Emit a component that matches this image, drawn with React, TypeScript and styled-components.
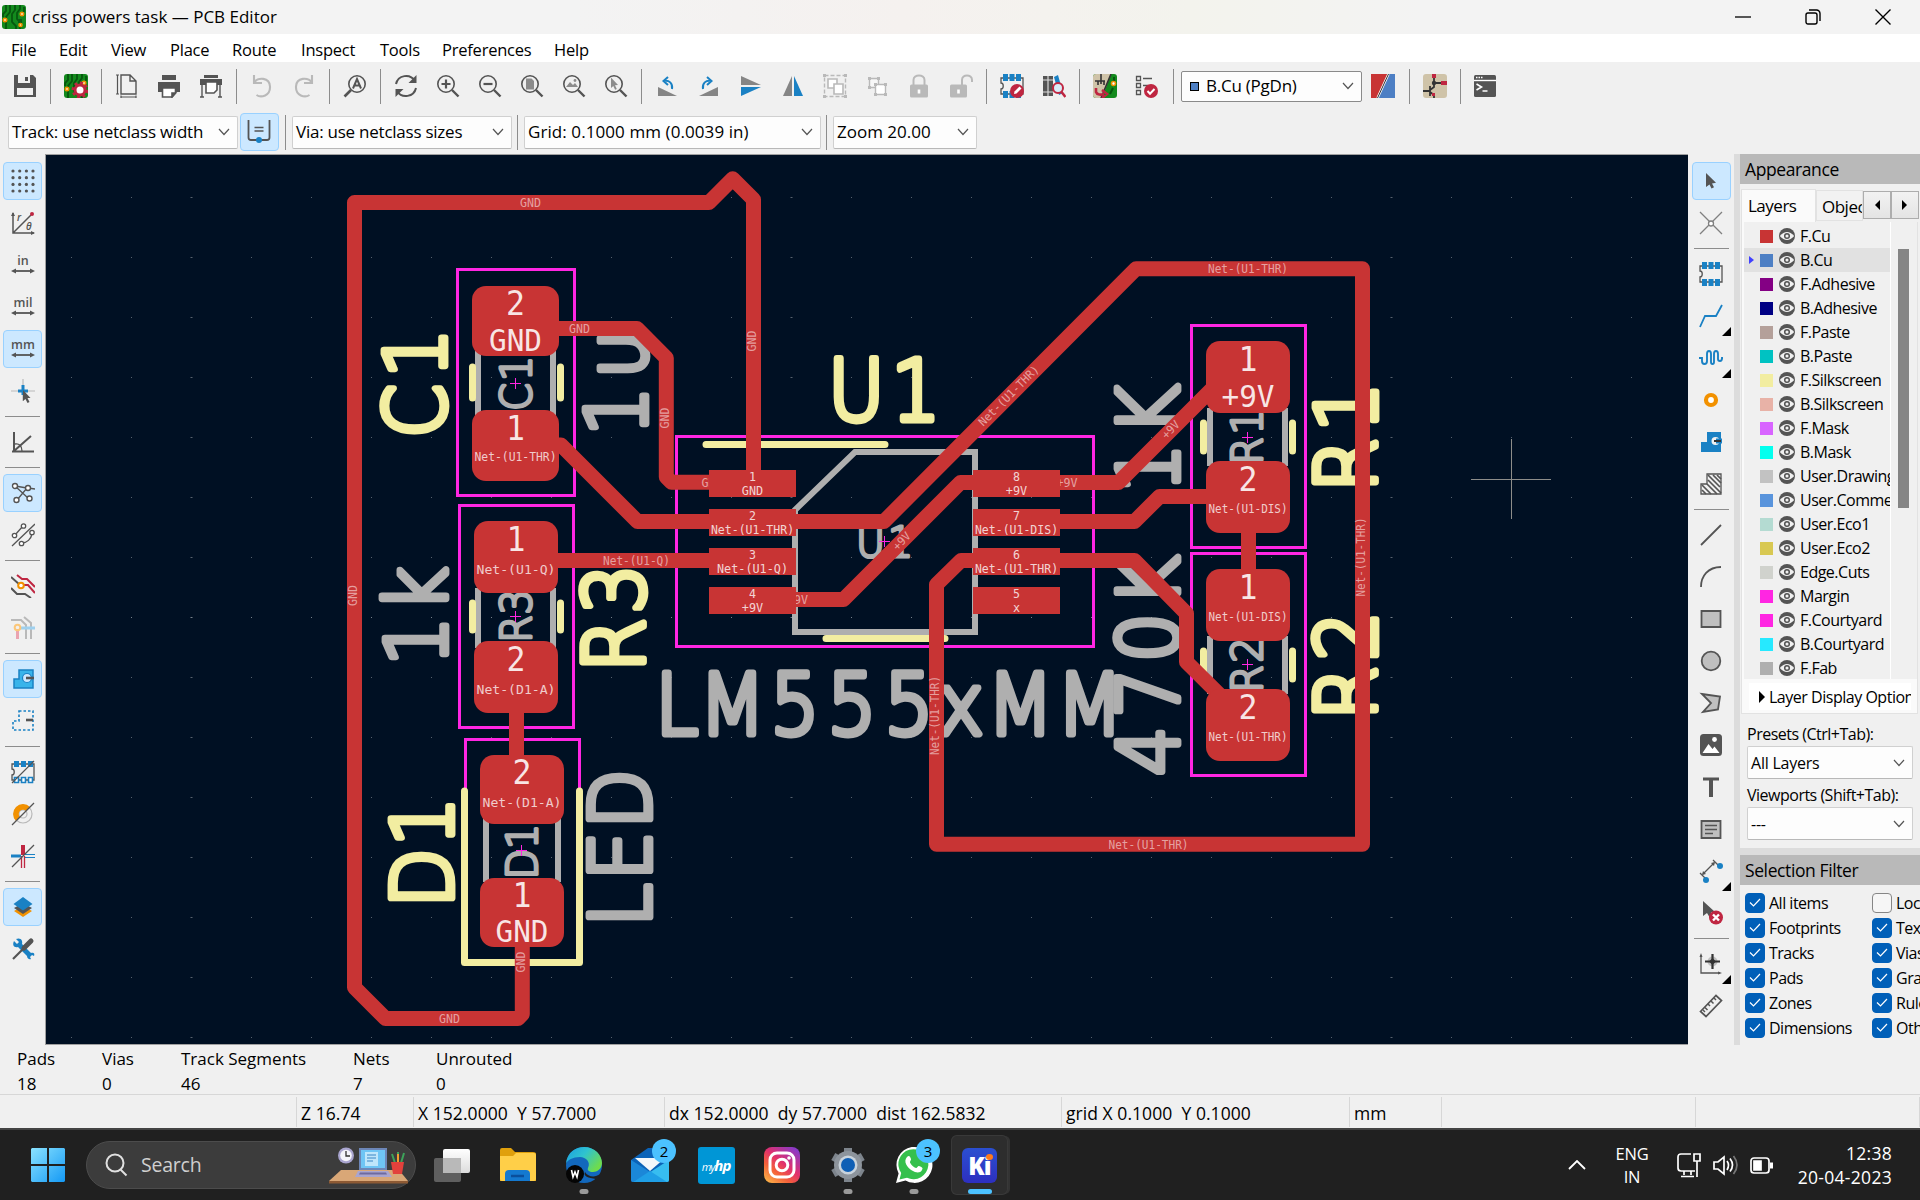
import React from "react";
import styled, { createGlobalStyle } from "styled-components";

const Global = createGlobalStyle`
  * { box-sizing: border-box; }
  body { margin: 0; background: #f0f0f0; overflow: hidden; }
`;

const UI = `"Open Sans", "Noto Sans", sans-serif`;
const G = "#545454";
const B = "#1a81c4";
const R = "#bf2641";
const O = "#f29100";
const L = "#b9b9b9";

/* ---------- shell ---------- */
const Win = styled.div`
  width: 1920px;
  height: 1200px;
  display: flex;
  flex-direction: column;
  background: #f0f0f0;
  color: #000;
  font-family: ${UI};
  font-size: 17px;
  letter-spacing: -0.22px;
  line-height: 24px;
  white-space: nowrap;
  overflow: hidden;
`;
const TitleBar = styled.header`
  height: 34px;
  flex: none;
  display: flex;
  align-items: center;
  padding: 0 2px;
  background: linear-gradient(90deg, #f3f3f3 0 30%, #f5f1ef 47%, #f3f3ed 62%, #f3f3f3 74%);
`;
const TitleText = styled.span`
  flex: 1;
  margin-left: 6px;
  font-size: 17px;
  letter-spacing: 0;
`;
const WinButtons = styled.div`
  display: flex;
`;
const WinButton = styled.div`
  width: 70px;
  height: 34px;
  display: flex;
  align-items: center;
  justify-content: center;
`;
const MenuBar = styled.nav`
  height: 28px;
  flex: none;
  display: flex;
  align-items: center;
  background: #fff;
  padding: 3px 0 0 11px;
`;
const MenuItem = styled.span<{ $w: number }>`
  width: ${(p) => p.$w}px;
  flex: none;
  font-size: 16.5px;
`;
const ToolRow = styled.div<{ $h: number; $pl: number }>`
  height: ${(p) => p.$h}px;
  padding-left: ${(p) => p.$pl}px;
  flex: none;
  display: flex;
  align-items: center;
`;
const Tool = styled.div<{ $on?: boolean }>`
  position: relative;
  width: 39px;
  height: 38px;
  margin: 2px 1.5px;
  flex: none;
  display: flex;
  align-items: center;
  justify-content: center;
  border-radius: 4px;
  border: 1px solid ${(p) => (p.$on ? "#99d1ff" : "transparent")};
  background: ${(p) => (p.$on ? "#cce8ff" : "transparent")};
`;
const VSep = styled.div<{ $m?: string }>`
  width: 1px;
  height: 35px;
  margin: ${(p) => p.$m || "0 4px"};
  background: #8c8c8c;
  flex: none;
`;
const HSep = styled.div`
  width: 35px;
  height: 1px;
  margin: 4px 0;
  background: #8c8c8c;
  flex: none;
`;
const Combo = styled.div<{ $w: number; $h?: number; $dark?: boolean; $ls?: number }>`
  width: ${(p) => p.$w}px;
  height: ${(p) => p.$h || 33}px;
  flex: none;
  display: flex;
  align-items: center;
  justify-content: space-between;
  padding: 0 7px 0 3px;
  letter-spacing: ${(p) => p.$ls ?? -0.24}px;
  background: #fdfdfd;
  border: 1px solid ${(p) => (p.$dark ? "#8a8a8a" : "#d0d0d0")};
  border-bottom-color: ${(p) => (p.$dark ? "#8a8a8a" : "#b8b8b8")};
  border-radius: 2px;
`;
const LayerName = styled.span`
  display: flex;
  align-items: center;
  gap: 7px;
  padding-left: 5px;
`;
const TinySwatch = styled.i`
  width: 9px;
  height: 9px;
  background: #4d7fc4;
  border: 1px solid #000;
`;
const Body = styled.div`
  height: 891px;
  flex: none;
  display: flex;
`;
const SideBar = styled.div<{ $w: number }>`
  width: ${(p) => p.$w}px;
  padding-top: 6px;
  flex: none;
  display: flex;
  flex-direction: column;
  align-items: center;
`;
const Corner = styled.i`
  position: absolute;
  right: -1px;
  bottom: -2px;
  border-left: 9px solid transparent;
  border-bottom: 9px solid #000;
`;
const CanvasBox = styled.main`
  width: 1643px;
  flex: none;
  border: 1px solid #a0a0a0;
  border-right: 0;
  background: #001023;
  & > svg { display: block; }
`;
const Splitter = styled.div`
  width: 6px;
  flex: none;
  background: #dcdcdc;
`;

/* ---------- right panel ---------- */
const Panel = styled.aside`
  width: 180px;
  display: flex;
  flex-direction: column;
  overflow: hidden;
`;
const PanelHead = styled.div`
  height: 30px;
  flex: none;
  padding-left: 5px;
  display: flex;
  align-items: center;
  background: #b9b9b9;
  font-size: 17.5px;
  letter-spacing: -0.4px;
`;
const TabRow = styled.div`
  height: 38px;
  flex: none;
  display: flex;
  align-items: flex-end;
  padding-left: 1px;
`;
const Tab = styled.div<{ $w: number; $active?: boolean }>`
  width: ${(p) => p.$w}px;
  height: ${(p) => (p.$active ? 33 : 31)}px;
  margin-bottom: ${(p) => (p.$active ? 0 : 1)}px;
  padding: 4px 0 0 ${(p) => (p.$active ? 6 : 5)}px;
  overflow: hidden;
  letter-spacing: -0.5px;
  border: 1px solid #e2e2e2;
  border-bottom: ${(p) => (p.$active ? "0" : "1px solid #e2e2e2")};
  background: ${(p) => (p.$active ? "#fafafa" : "#f2f2f2")};
`;
const TabArrow = styled.div`
  width: 28px;
  height: 28px;
  margin-bottom: 3px;
  display: flex;
  align-items: center;
  justify-content: center;
  border: 1px solid #adadad;
  background: linear-gradient(#f2f2f2, #e4e4e4);
`;
const Notebook = styled.div`
  width: 177px;
  height: 492px;
  margin-left: 1px;
  flex: none;
  background: #fafafa;
  border: 1px solid #e2e2e2;
  border-top: 0;
`;
const ListArea = styled.div`
  height: 457px;
  margin-left: 2px;
  display: flex;
  background: #f0f0f0;
`;
const LayerList = styled.div`
  width: 147px;
  overflow: hidden;
  padding-top: 2px;
  border-right: 1px solid #fff;
`;
const LayerRow = styled.div<{ $sel?: boolean }>`
  height: 24px;
  display: flex;
  align-items: center;
  padding-left: 5px;
  font-size: 16px;
  letter-spacing: -0.5px;
  background: ${(p) => (p.$sel ? "#e1e1e1" : "transparent")};
  & > * { flex: none; }
`;
const RowMark = styled.i<{ $sel?: boolean }>`
  width: 11px;
  &::before {
    content: "";
    display: block;
    width: 0;
    border: 4px solid transparent;
    border-right: 0;
    border-left: 5px solid ${(p) => (p.$sel ? "#4040ff" : "transparent")};
  }
`;
const Swatch = styled.i<{ $c: string }>`
  width: 13px;
  height: 13px;
  margin-right: 6px;
  background: ${(p) => p.$c};
`;
const LayerText = styled.span`
  margin-left: 5px;
`;
const ScrollCol = styled.div`
  flex: 1;
  padding: 27px 0 0 7px;
`;
const Thumb = styled.div`
  width: 11px;
  height: 259px;
  background: #858585;
`;
const LayerOptions = styled.div`
  width: 162px;
  height: 27px;
  margin: 4px 0 0 7px;
  padding-left: 10px;
  display: flex;
  align-items: center;
  gap: 4px;
  overflow: hidden;
  background: #fff;
  font-size: 16px;
  letter-spacing: -0.48px;
  & > svg { flex: none; }
`;
const Presets = styled.div`
  height: 134px;
  flex: none;
  padding: 8px 0 0 7px;
  font-size: 16px;
  letter-spacing: -0.5px;
`;
const PresetLabel = styled.div`
  height: 24px;
`;
const PresetCombo = styled(Combo)`
  margin-bottom: 4px;
`;
const Gap = styled.div`
  height: 7px;
  flex: none;
  background: #dcdcdc;
`;
const Filters = styled.div`
  flex: 1;
  padding: 5px 0 0 5px;
  display: grid;
  grid-template-columns: 127px 80px;
  grid-auto-rows: 25px;
  font-size: 16px;
  letter-spacing: -0.5px;
`;
const Check = styled.label`
  display: flex;
  align-items: center;
  gap: 4px;
`;
const Box = styled.i<{ $off?: boolean }>`
  width: 20px;
  height: 20px;
  flex: none;
  display: flex;
  align-items: center;
  justify-content: center;
  border-radius: 4px;
  background: ${(p) => (p.$off ? "#f6f6f6" : "#005fb8")};
  border: 1px solid ${(p) => (p.$off ? "#868686" : "#005fb8")};
`;

/* ---------- footer ---------- */
const InfoBar = styled.div`
  height: 50px;
  flex: none;
  display: flex;
  padding: 2px 0 0 17px;
  border-bottom: 1px solid #d7d7d7;
  font-size: 17px;
  letter-spacing: 0;
`;
const Info = styled.div<{ $w: number }>`
  width: ${(p) => p.$w}px;
  line-height: 24.5px;
`;
const StatusBar = styled.div`
  height: 33px;
  flex: none;
  display: flex;
  padding-top: 2px;
  font-size: 17.5px;
  letter-spacing: 0.05px;
`;
const Status = styled.div<{ $w: number }>`
  width: ${(p) => p.$w}px;
  height: 30px;
  padding-left: 4px;
  line-height: 32px;
  border-right: 1px solid #d7d7d7;
  white-space: pre;
`;
const TaskBar = styled.footer`
  height: 72px;
  flex: none;
  display: flex;
  align-items: center;
  background: #202020;
  border-top: 2px solid #434343;
  color: #fff;
  padding: 0 28px 0 30px;
`;
const StartBox = styled.div`
  width: 56px;
  display: flex;
`;
const Search = styled.div`
  width: 330px;
  height: 48px;
  flex: none;
  display: flex;
  align-items: center;
  padding: 0 6px 0 17px;
  border-radius: 24px;
  background: #3c3c3c;
  border: 1px solid #4c4c4c;
  color: #cfcfcf;
  font-size: 19.5px;
`;
const SearchText = styled.span`
  flex: 1;
  margin-left: 13px;
`;
const TaskApp = styled.div<{ $active?: boolean }>`
  position: relative;
  width: ${(p) => (p.$active ? 57 : 66)}px;
  height: 60px;
  margin-left: ${(p) => (p.$active ? 4 : 0)}px;
  flex: none;
  display: flex;
  align-items: center;
  justify-content: center;
  border-radius: 6px;
  background: ${(p) => (p.$active ? "#2d2d2d" : "transparent")};
  box-shadow: ${(p) => (p.$active ? "inset 0 0 0 1px #393939, 3px 0 0 -1px #333" : "none")};
`;
const Apps = styled.div`
  display: flex;
  margin-left: 3px;
  flex: 1;
`;
const Run = styled.i<{ $on?: boolean }>`
  position: absolute;
  bottom: 1px;
  left: 50%;
  width: ${(p) => (p.$on ? 24 : 9)}px;
  height: 5px;
  border-radius: 3px;
  transform: translateX(-50%);
  background: ${(p) => (p.$on ? "#4cc2ff" : "#9a9a9a")};
`;
const Badge = styled.span`
  position: absolute;
  top: 4px;
  right: 7px;
  width: 24px;
  height: 24px;
  border-radius: 50%;
  background: #4cc2ff;
  color: #000;
  font-size: 15px;
  text-align: center;
`;
const HpText = styled.div`
  width: 37px;
  height: 37px;
  border-radius: 3px;
  background: #0096d6;
  font: italic 700 15px/36px ${UI};
  letter-spacing: -1px;
  text-align: center;
  small { font-size: 11px; font-weight: 400; }
`;
const KiText = styled.div`
  position: relative;
  width: 35px;
  height: 35px;
  border-radius: 6px;
  background: linear-gradient(#2b4fd0, #2d2fc0);
  font: 800 24px/35px ${UI};
  letter-spacing: -1px;
  text-align: center;
  &::after {
    content: "";
    position: absolute;
    right: 4px;
    top: 6px;
    width: 7px;
    height: 6px;
    border-radius: 50%;
    background: #ff7a1a;
  }
`;
const Tray = styled.div`
  display: flex;
  align-items: center;
  font-size: 16.5px;
  line-height: 24px;
`;
const Lang = styled.div`
  width: 40px;
  margin: 0 25px 0 26px;
  text-align: center;
  line-height: 23px;
`;
const Clock = styled.div`
  width: 100px;
  margin-left: 15px;
  text-align: right;
  font-size: 17.5px;
  letter-spacing: 0.3px;
`;

/* ---------- icons ---------- */
const Svg = ({ children, s = 24, vb = "0 0 24 24" }: any) => (
  <svg width={s} height={s} viewBox={vb} fill="none" stroke={G} strokeWidth={1.6}>{children}</svg>
);
const Chevron = ({ c = "#555" }: any) => (
  <svg width="12" height="8" viewBox="0 0 12 8" fill="none" stroke={c} strokeWidth="1.2"><path d="M1 1l5 5.5L11 1" /></svg>
);
const Lens = ({ children }: any) => (
  <Svg><circle cx="10" cy="10" r="8.2" /><path d="M16 16l6.5 6.5" strokeWidth="2.4" />{children}</Svg>
);
const Board = () => (
  <>
    <rect x="0" y="0" width="24" height="24" rx="3" fill="#138a1d" stroke="none" />
    <path d="M4 0v6l-3 3v3M8 0v7l-4 5v12M13 0v5l-3 4v8l4 4v3M18 0v4l-3 4v6l3 3v7M22 2v5" stroke="#07570f" strokeWidth="1.8" />
    <g fill="#ffe9c0" stroke={O}><circle cx="3" cy="15" r="1.7" /><circle cx="20" cy="9" r="1.7" /></g>
  </>
);
const FootprintShape = () => (
  <>
    <path d="M1 4h22v16H1v-5c3 0 3-6 0-6z" strokeWidth="1.3" />
    <g fill={B} stroke="none">
      {[3, 9.5, 16].map((x) => <path key={x} d={`M${x} 0h5v7h-5zM${x} 17h5v7h-5z`} />)}
    </g>
  </>
);
const Arrowed = () => (
  <>
    <path d="M3 18h18" strokeWidth="1.8" />
    <path d="M0 18l5-2.600v5.200zM24 18l-5-2.600v5.200z" fill={G} stroke="none" />
  </>
);
const UnitText = styled.text`
  font: 600 12.5px ${UI};
  letter-spacing: 0;
  fill: ${G};
  stroke: none;
`;
const ThetaText = styled.text`
  font: italic 600 10px ${UI};
  letter-spacing: 0;
  fill: ${G};
  stroke: none;
`;
const Unit = ({ t }: { t: string }) => (
  <Svg><UnitText x="12" y="12" textAnchor="middle">{t}</UnitText><Arrowed /></Svg>
);
const Slash = () => <path d="M1 23L23 1" strokeWidth="1.2" />;

const I: Record<string, React.ReactNode> = {
  app: <Svg><Board /><path d="M16 14h4v4h-4z" fill="#0b5d14" stroke="none" /><circle cx="18.500" cy="20" r="1.500" fill="#ffe9c0" stroke={O} /></Svg>,
  save: <Svg><path d="M1 1h19l3 3v19H1z" fill={G} stroke="none" /><path d="M5 1h12v8H5zM4 14h16v7H4z" fill="#f0f0f0" stroke="none" /><path d="M12 3h3v4h-3z" fill={G} stroke="none" /></Svg>,
  setup: <Svg><Board /><circle cx="16" cy="16" r="5" stroke={R} strokeWidth="3" fill="#fff" /><circle cx="16" cy="16" r="7.200" stroke={R} strokeWidth="2.500" strokeDasharray="3 2.600" /></Svg>,
  page: <Svg><path d="M6 1h9l6 6v13H6zM15 1v6h6" strokeWidth="1.400" /><path d="M2.500 1v19M1 1h3M1 20h3M6 23h15M6 21.500v3M21 21.500v3" strokeWidth="1.200" /></Svg>,
  print: <Svg><path d="M5 1h14v5H5zM1 8h22v10h-4v-4H5v4H1z" fill={G} stroke="none" /><path d="M5.500 14h13v5l-3.500 4H5.500z" fill="#fff" /><path d="M15 23v-4h3.500z" fill={G} /></Svg>,
  plot: <Svg><path d="M5 1h14v3H5zM1 5h22v6H1z" fill={G} stroke="none" /><path d="M3 11v12M1 23h4M21 11v12M19 23h4" strokeWidth="1.400" /><path d="M7 8h11v8l-3 3H7z" fill="#fff" /></Svg>,
  undo: <Svg><path d="M4 1v8h8M4 8.500C8 3 19.500 3 20 12.500S11 24 6.500 21" stroke={L} strokeWidth="2.100" /></Svg>,
  redo: <Svg><path d="M20 1v8h-8M20 8.500C16 3 4.500 3 4 12.500S13 24 17.500 21" stroke={L} strokeWidth="2.100" /></Svg>,
  find: <Svg><circle cx="14" cy="10" r="8.200" /><path d="M8 16l-6.500 6.500" strokeWidth="2.600" /><path d="M10 14.500L14 5l4 9.500M11.500 11.500h5" strokeWidth="2" /></Svg>,
  refresh: <Svg><path d="M2 10C4 1 16-1 21 7M22 14C20 23 8 25 3 17" strokeWidth="2" /><path d="M22.500 1v8h-8zM1.500 23v-8h8z" fill={G} stroke="none" /></Svg>,
  zin: <Lens><path d="M10 5.500v9M5.500 10h9" strokeWidth="2.200" /></Lens>,
  zout: <Lens><path d="M5.500 10h9" strokeWidth="2.200" /></Lens>,
  zfit: <Lens><path d="M6 4.500h5.500l2.500 2.500v8.500h-8z" fill="#8c8c8c" stroke="none" /></Lens>,
  zobj: <Lens><path d="M4 13l4-5 3 3 2-2 3 4z" fill="#8c8c8c" stroke="none" /><circle cx="13" cy="6.500" r="1.400" fill="#8c8c8c" stroke="none" /></Lens>,
  zsel: <Lens><path d="M7 3.500l7 7.500-3 .3 1.800 3.700-1.700.8-1.800-3.800-2.300 2z" fill="#8c8c8c" stroke="none" /></Lens>,
  ccw: <Svg><path d="M3 13v9h19z" fill="#858585" stroke="none" /><path d="M17 15c1-6-3-9-8-8M13 3L8.500 7l4.500 4" stroke={B} strokeWidth="2" /></Svg>,
  cw: <Svg><path d="M21 13v9H2z" fill="#858585" stroke="none" /><path d="M6 15c-1-6 3-9 8-8M10 3l4.500 4-4.500 4" stroke={B} strokeWidth="2" /></Svg>,
  fv: <Svg><path d="M2 2v9h20z" fill="#858585" stroke="none" /><path d="M2 22v-9h20z" fill={B} stroke="none" /></Svg>,
  fh: <Svg><path d="M11 2v20H2z" fill="#858585" stroke="none" /><path d="M13 2v20h9z" fill={B} stroke="none" /></Svg>,
  group: <Svg><g stroke={L}><rect x="1.500" y="1.500" width="21" height="21" strokeDasharray="4 2" strokeWidth="1.400" /><path d="M5 5h9v9H5z" fill="#fff" /><path d="M11 10h9v10h-9z" fill="#fff" /></g><path d="M0 0h3v3H0zM21 0h3v3h-3zM0 21h3v3H0zM21 21h3v3h-3z" fill={L} stroke="none" /></Svg>,
  ungroup: <Svg><g stroke={L} strokeWidth="1.400"><path d="M4.500 4.500h9v9h-9z" fill="#f7f7f7" /><path d="M10.500 10.500h10v10h-10z" fill="#fff" /></g><path d="M3 3h3v3H3zM12 3h3v3h-3zM3 12h3v3H3zM9 9h3v3H9zM19 9h3v3h-3zM9 19h3v3H9zM19 19h3v3h-3z" fill={L} stroke="none" /></Svg>,
  lock: <Svg><path d="M6.500 11V6c0-6 11-6 11 0v5" stroke={L} strokeWidth="2" /><rect x="3" y="10.500" width="18" height="13" rx="1.500" fill={L} stroke="none" /><path d="M12 15.500v4" stroke="#fff" strokeWidth="2.600" /></Svg>,
  unlock: <Svg><path d="M13 11V6c0-6 10-6 10 0v2" stroke={L} strokeWidth="2" /><rect x="1" y="10.500" width="17" height="13" rx="1.500" fill={L} stroke="none" /><path d="M9.500 15.500v4" stroke="#fff" strokeWidth="2.600" /></Svg>,
  fpedit: <Svg><FootprintShape /><circle cx="17" cy="17" r="7" fill={R} stroke="none" /><path d="M14 20l.5-2.500 5-5 2 2-5 5z" fill="#fff" stroke="none" /></Svg>,
  lib: <Svg><path d="M1 2h4.500v20H1zM6.500 2H11v20H6.500z" fill={G} stroke="none" /><path d="M1 6h10M1 18h10" stroke="#ddd" strokeWidth="1" /><path d="M12 3l4-2 5 18-4 2z" fill={B} stroke="none" /><circle cx="16" cy="14" r="5" fill="#d9edf8" stroke={R} strokeWidth="2" /><path d="M19.500 18l4 5" stroke={R} strokeWidth="2.600" /></Svg>,
  update: <Svg><rect width="24" height="24" rx="3" fill="#138a1d" stroke="none" /><path d="M3 0h15L9 24H3a3 3 0 01-3-3V3a3 3 0 013-3z" fill="#cfc3a8" stroke="none" /><path d="M8 0v10M2 7h10M5 7v4M11 7v4M18 0L8 24" stroke="#333" /><path d="M21 3v7M17 20l3-6" stroke="#07570f" strokeWidth="2" /><circle cx="20.500" cy="9.500" r="2" fill="#fff" stroke={O} /><path d="M3 14v4c1 3 5 3 8 2M9 16l5 4-5 4" stroke={R} strokeWidth="2.600" /></Svg>,
  drc: <Svg><g strokeWidth="1.300"><path d="M1.500 2.500h4v4h-4zM1.500 9.500h4v4h-4zM1.500 16.500h4v4h-4zM8 4.500h9M8 11.500h5" /></g><circle cx="16" cy="17" r="7" fill={R} stroke="none" /><path d="M12.500 17l2.500 2.700 4.500-4.700" stroke="#fff" strokeWidth="2" /></Svg>,
  pair: <Svg><path d="M0 0h17L6 24H0z" fill="#c83434" stroke="none" /><path d="M18 0h6v24H7z" fill="#4d7fc4" stroke="none" /><path d="M17.500 0L6.500 24" stroke="#fff" strokeWidth="2.400" /><path d="M17.500 0L6.500 24" stroke="#333" strokeWidth="1" /></Svg>,
  sch: <Svg><rect width="24" height="24" rx="3" fill="#cfc3a8" stroke="none" /><path d="M11 3v6h8M0 17h7M7 12v10M11 9v4l-4 3M7 18l4 3v3" stroke="#333" strokeWidth="1.800" /><circle cx="11" cy="9" r="2.200" fill="#333" stroke="none" /><path d="M9 0h4v4H9zM18 7h6v4h-6zM9 19h3v3H9z" fill={R} stroke="none" /></Svg>,
  term: <Svg><rect x="1" y="1" width="22" height="22" rx="1.500" fill={G} stroke="none" /><path d="M1 6.500h22" stroke="#fff" strokeWidth="1.400" /><path d="M3 3.500h7" stroke="#fff" strokeDasharray="1.500 1" strokeWidth="1.500" /><path d="M3.500 10l5 3-5 3M9.500 17h5" stroke="#fff" strokeWidth="1.600" /></Svg>,
  autow: <Svg><path d="M1.500 0v17.500q0 2.500 2.500 2.500h16q2.500 0 2.500-2.500V0" strokeWidth="1.800" /><path d="M7.500 7.500h9M7.500 11h9" strokeWidth="1.300" /><circle cx="12" cy="20" r="3" fill={B} stroke="none" /></Svg>,

  grid: <Svg><g fill={G} stroke="none">{[2, 8.700, 15.400, 22].map((x) => [2, 8.700, 15.400, 22].map((y) => <circle key={`${x}${y}`} cx={x} cy={y} r="1.600" />))}</g></Svg>,
  polar: <Svg><path d="M2 2v20h21M2 22L20 4" strokeWidth="1.500" /><path d="M0 5l2-4 2 4zM20 20l4 2-4 2z" fill={G} stroke="none" /><circle cx="21" cy="3" r="2" fill={R} stroke="none" /><ThetaText x="6" y="10">r</ThetaText><ThetaText x="15" y="19">θ</ThetaText></Svg>,
  inch: <Unit t="in" />,
  mil: <Unit t="mil" />,
  mm: <Unit t="mm" />,
  cursor: <Svg><path d="M0 12h24M12 0v22" stroke={L} strokeWidth="1.200" /><path d="M12 6v10M7 12h10" stroke={B} strokeWidth="3" /><path d="M12 11v11l2.500-2 2 4 2-1-2-4h3z" fill={G} stroke="none" /></Svg>,
  angle: <Svg><path d="M3 2v20M1 21.500h22M3 21L20 6" strokeWidth="2" /><path d="M4 14c4-1 7 2 7 7" strokeWidth="1.300" /></Svg>,
  rats: <Svg><path d="M4 5l12 2M16 7L6 19M4 5l13 12M17 7l7 1" strokeWidth="1.300" /><g fill="#fff" strokeWidth="1.400"><circle cx="4" cy="5" r="2.500" /><circle cx="17" cy="7" r="2.500" /><circle cx="5.500" cy="19" r="2.500" /><circle cx="18.500" cy="17.500" r="2.500" /></g></Svg>,
  curved: <Svg><path d="M1 23L24 1M4 12l8-9M11 20c5 0 9-4 10-9" strokeWidth="1.300" /><g fill="#fff" strokeWidth="1.300"><circle cx="3.500" cy="12.500" r="2.200" /><circle cx="12.500" cy="3" r="2.200" /><circle cx="10.500" cy="20.500" r="2.200" /><circle cx="21" cy="9.500" r="2.200" /></g></Svg>,
  hilite: <Svg><path d="M0 3l9 8M0 14l6 6h8l6 4" strokeWidth="2" /><path d="M6 1l5 4h5l8 8M13 11h4l7 8" stroke={R} strokeWidth="2" /><circle cx="10" cy="11.500" r="2.800" stroke={O} strokeWidth="2" fill="#fff" /></Svg>,
  netcol: <Svg><path d="M0 4h10l5 5v14M13 1l7 6v16" stroke={L} strokeWidth="2" /><path d="M9 12h15" stroke="#9fd0ee" strokeWidth="3" /><path d="M6.500 13v10" stroke="#eaa3b0" strokeWidth="3" /><circle cx="6.500" cy="11.500" r="2.800" stroke="#fbc77a" strokeWidth="2" /></Svg>,
  zone: <Svg><path d="M8 3h14v18H3v-9h5z" fill="#39b4ea" stroke={B} strokeWidth="1.500" /><circle cx="16" cy="11" r="4.500" fill="#cce8ff" stroke={B} strokeWidth="1.200" /><path d="M15 11h8" strokeWidth="2.600" /></Svg>,
  zoneo: <Svg><path d="M8 2h14v19H2v-9h6z" stroke={B} strokeWidth="1.600" strokeDasharray="2.500 2" /><path d="M15 11h7" strokeWidth="2.600" /></Svg>,
  fpo: <Svg><path d="M1 4h22v16H1v-5c3 0 3-6 0-6z" strokeWidth="1.300" /><path d="M3 1h5v6H3zM10 1h5v6h-5zM17 1h5v6h-5z" fill={B} stroke="none" /><path d="M3.500 17.500h4v5h-4zM10.500 17.500h4v5h-4zM17.500 17.500h4v5h-4z" fill="#fff" stroke={B} /><Slash /></Svg>,
  viao: <Svg><circle cx="12" cy="12" r="9" stroke={L} strokeWidth="1.200" /><circle cx="12" cy="12" r="4" stroke={L} strokeWidth="1.200" /><path d="M5 19A9.500 9.500 0 0119 5l-4 4a4 4 0 00-6 6z" fill={O} stroke="none" /><Slash /></Svg>,
  trko: <Svg><path d="M0 12h10" stroke={B} strokeWidth="3" /><path d="M14 10.500h10M14 13.500h10" stroke={B} strokeWidth="1.200" /><path d="M12 1v10" stroke={R} strokeWidth="4" /><path d="M10.500 12v12M13.500 12v12" stroke={R} strokeWidth="1.300" /><Slash /></Svg>,
  layers: <Svg><path d="M3 16l9 6 9-6-9-5z" fill={O} stroke="none" /><path d="M3 13l9 6 9-6-9-5z" fill={G} stroke="none" /><path d="M2.500 9L12 15.500 21.500 9 12 2z" fill={B} stroke="none" /></Svg>,
  tools: <Svg><path d="M3 4l3 3 2-2-3-3c5-2 7 2 6 5l9 9c3-1 4 1 3 3l-2-1-2 2 1 2c-2 1-4-1-4-3L7 10C3 11 1 8 3 4z" fill={B} stroke="none" /><path d="M2 22l10-10" strokeWidth="2.200" /><path d="M13 11l7-7" strokeWidth="5" strokeLinecap="round" /></Svg>,

  select: <Svg><path d="M7 4v14l3.500-2.500 2 4 2.500-1.300-2-3.700 4-.8z" fill={G} stroke="none" /></Svg>,
  rat: <Svg><path d="M1 1l22 22M23 1L1 23" strokeWidth="1.300" stroke="#808080" /><circle cx="12" cy="12.500" r="2.500" fill="#fff" stroke="#808080" strokeWidth="1.300" /></Svg>,
  fp: <Svg><FootprintShape /></Svg>,
  track: <Svg><path d="M1 23l5-11h11l6-11" stroke={B} strokeWidth="1.800" /></Svg>,
  tune: <Svg><path d="M0 12h3v3q0 3 2.500 3T8 15V8q0-3 2-3t2 3v8q0 2 1.500 2t1.500-2V8q0-3 2-3t2 3v5q0 2 2 2t2-3h2" stroke={B} strokeWidth="1.900" /></Svg>,
  via: <Svg><circle cx="12" cy="12" r="5" stroke={O} strokeWidth="4.200" fill="#fff" /></Svg>,
  zoneadd: <Svg><path d="M8 2h14v20H2V12h6z" fill={B} stroke="none" /><circle cx="16.500" cy="11" r="4" fill="#f0f0f0" stroke="none" /><path d="M17 8.500h6v5h-6z" fill={B} stroke="none" /><path d="M15 11h7" strokeWidth="2" stroke="#333" /></Svg>,
  rule: <Svg><path d="M8 2h14v20H2V12h6z" strokeWidth="1.300" /><path d="M9 3l12 12M9 8l13 13M8 12l10 10M3 13l9 9M14 3l8 8M18 3l4 4M3 18l4 4" strokeWidth="1.700" /></Svg>,
  line: <Svg><path d="M2 22L22 2" strokeWidth="1.800" /></Svg>,
  arc: <Svg><path d="M2 22C2 11 9 2 22 2" strokeWidth="1.800" /></Svg>,
  rect: <Svg><path d="M2.500 4h19v16h-19z" fill="#bfbfbf" strokeWidth="1.800" /></Svg>,
  circle: <Svg><circle cx="12" cy="12" r="9.300" fill="#bfbfbf" strokeWidth="1.800" /></Svg>,
  poly: <Svg><path d="M3 3l18 2.500-2 13L4 21l8-9z" fill="#bfbfbf" strokeWidth="1.800" /></Svg>,
  image: <Svg><rect x="1" y="1" width="22" height="22" rx="3.500" fill={G} stroke="none" /><path d="M3.500 20l6-9 4 5 2-2.500 5 6.500z" fill="#fff" stroke="none" /><circle cx="15.500" cy="6.500" r="2.400" fill="#fff" stroke="none" /></Svg>,
  text: <Svg><path d="M4 2.500h16v3h-6V22h-4V5.500H4z" fill={G} stroke="none" /></Svg>,
  tbox: <Svg><path d="M2.500 4h19v17h-19z" fill="#bfbfbf" strokeWidth="1.800" /><path d="M6 8.500h10M6 12.500h12M6 16.500h8M9 8.500h9" strokeWidth="1.300" /></Svg>,
  dim: <Svg><path d="M4 15L15 4M1 14l6 6M14 1l6 6" strokeWidth="1.300" /><path d="M3 16l1-4 3 3zM16 3l-4 1 3 3z" fill={G} stroke="none" /><g fill={B} stroke="none"><circle cx="21" cy="7" r="3" /><circle cx="7" cy="21" r="3" /></g></Svg>,
  del: <Svg><path d="M4 0v15l4-3 3 5 2-1-1-5h4z" fill={G} stroke="none" /><circle cx="17" cy="16.500" r="7" fill={R} stroke="none" /><path d="M14 13.500l6 6M20 13.500l-6 6" stroke="#fff" strokeWidth="2.400" /></Svg>,
  origin: <Svg><path d="M2 3v18h19" strokeWidth="1.300" /><path d="M.5 5L2 1l1.500 4zM19 19.500l4 1.500-4 1.500z" fill={G} stroke="none" /><circle cx="13.500" cy="9.500" r="5" fill="#bfbfbf" stroke="none" /><path d="M13.500 2v15M6 9.500h15" strokeWidth="2.200" stroke="#333" /><path d="M10 9.500L13.500 6 17 9.500 13.500 13z" fill="#333" stroke="none" /></Svg>,
  ruler: <Svg><path d="M1.500 17.500L17 1.500l5.500 5L7 22.500z" strokeWidth="1.700" /><path d="M6 13.500l2.500 2.500M9 10l2 2M12 7l2.500 2.500M15 4l2 2M4 16l2 2" strokeWidth="1.500" /></Svg>,
};

const Eye = () => (
  <svg width="16" height="16" viewBox="0 0 16 16">
    <circle cx="8" cy="8" r="8" fill="#545454" />
    <path d="M.8 8Q8-.2 15.200 8 8 16.200.8 8z" fill="#f0f0f0" />
    <circle cx="8" cy="8" r="2.300" fill="#f0f0f0" stroke="#545454" strokeWidth="1.500" />
  </svg>
);

/* ---------- board drawing ---------- */
const CU = "#c83434";
const SILK = "#f2eda1";
const FAB = "#afafaf";
const CY = "#ff26e2";

const Lettering = styled.text`
  font-family: "DejaVu Sans Light", "DejaVu Sans", sans-serif;
  font-weight: 200;
  letter-spacing: 0;
  text-anchor: middle;
  stroke-linejoin: round;
  stroke-linecap: round;
`;
const NetLabel = styled.text<{ $o: number }>`
  font-family: "DejaVu Sans Mono", monospace;
  letter-spacing: 0;
  fill: rgba(255, 255, 255, ${(p) => p.$o});
  text-anchor: middle;
`;

/* Silk and fab lettering: one centre position per character, squeezed by k along the line. */
const Glyphs = ({ t, at, base, up, c = SILK, size = 83.5, sw = 6.8, k = 0.92 }: any) => (
  <Lettering
    transform={`${up ? `translate(${base - sw / 2} 0) rotate(-90)` : `translate(0 ${base - sw / 2})`} scale(${k} 1)`}
    x={at.map((v: number) => (up ? -v : v) / k).join(" ")}
    y="0"
    fontSize={size}
    fill={c}
    stroke={c}
    strokeWidth={sw}
  >
    {t}
  </Lettering>
);
const Net = ({ x, y, t, w, r = 0, size = 11.5, o = 0.55 }: any) => (
  <NetLabel $o={o} transform={`translate(${x} ${y}) rotate(${r})`} y={size * 0.364} fontSize={size} textLength={w} lengthAdjust="spacingAndGlyphs">{t}</NetLabel>
);
const BigPad = ({ x, y, w, h, n, ny, net, ty, big }: any) => (
  <g>
    <rect x={x} y={y} width={w} height={h} rx="14" fill={CU} />
    <Net x={x + w / 2} y={ny} t={n} w={19} size={33} o={0.88} />
    {big ? <Net x={x + w / 2} y={ty} t={net} w={53} size={31} o={0.88} /> : <Net x={x + w / 2} y={ty} t={net} w={w - 5} size={12.5} o={0.75} />}
  </g>
);
const ChipPad = ({ x, y, n, net }: any) => (
  <g>
    <rect x={x} y={y} width="87" height="27" fill={CU} />
    <Net x={x + 43.5} y={y + 6.5} t={n} w={7} size={12.5} o={0.8} />
    <Net x={x + 43.5} y={y + 20.5} t={net} w={net.length * 7.1 - (net.length > 11 ? 2 : 0)} size={12.5} o={0.8} />
  </g>
);

const columns = Array.from({ length: 27 }, (_, i) => 71.5 + i * 60);
const rows = Array.from({ length: 15 }, (_, i) => 197.500 + i * 60);

const Pcb = () => (
  <svg width="1642" height="889" viewBox="46 155 1642 889" fill="none">
    <g>
      {columns.map((x, i) => rows.map((y, j) => {
        const wide = i % 10 === 2;
        const bright = j === 7;
        return <rect key={`${i}-${j}`} x={x - (wide ? 1 : 0.5)} y={y - 0.5} width={wide ? 2 : 1} height="1" fill={bright ? "#76808a" : "#56616d"} />;
      }))}
    </g>
    <g stroke={FAB} strokeWidth="6">
      <path d="M478 350v70M553 350v70M478 588v60M553 588v60M486 818v64M558 818v64M1210 408v58M1285 408v58M1210 636v58M1285 636v58" />
      <path d="M795 510L855 452H975V632H795z" />
    </g>
    <Glyphs t="1u" up base={649} at={[411, 354]} c={FAB} />
    <Glyphs t="1k" up base={449} at={[641, 589]} c={FAB} />
    <Glyphs t="LED" up base={653} at={[905, 856, 799]} c={FAB} />
    <Glyphs t="LM555xMM" base={737} at={[677, 732.5, 795, 852, 909, 961, 1020.5, 1090]} c={FAB} />
    <Glyphs t="1K" up base={1181} at={[468, 410]} c={FAB} />
    <Glyphs t="470K" up base={1181} at={[751, 693, 637.5, 581]} c={FAB} />
    <Glyphs t="C1" up base={533} at={[397, 368.5]} c={FAB} size={43} sw={3.2} />
    <Glyphs t="R3" up base={533} at={[629, 602]} c={FAB} size={43} sw={3.2} />
    <Glyphs t="D1" up base={539} at={[864, 836.5]} c={FAB} size={43} sw={3.2} />
    <Glyphs t="R1" up base={1264} at={[451, 422]} c={FAB} size={43} sw={3.2} />
    <Glyphs t="R2" up base={1264} at={[679, 650]} c={FAB} size={43} sw={3.2} />
    <Glyphs t="U1" base={559} at={[870.5, 900.5]} c={FAB} size={43} sw={3.2} />
    <Glyphs t="C1" up base={448} at={[411, 353]} />
    <Glyphs t="R3" up base={647} at={[645, 589]} />
    <Glyphs t="D1" up base={455} at={[878, 821.5]} />
    <Glyphs t="U1" base={423} at={[856.5, 916]} />
    <Glyphs t="R1" up base={1379} at={[465, 407]} />
    <Glyphs t="R2" up base={1379} at={[693, 636]} />
    <g stroke={CY} strokeWidth="3">
      <path d="M457.500 269.500h117v226h-117zM459.500 505.500h114v222h-114zM465.500 739.500h114v222h-114zM676.500 436.500h417v210h-417zM1191.500 325.500h114v222h-114zM1191.500 553.500h114v222h-114z" />
    </g>
    <g stroke={SILK} strokeWidth="7" strokeLinecap="round" strokeLinejoin="round">
      <path d="M464.500 791V962.500H579.500V791M472.500 367v31M560.500 367v31M472.500 603v27M560.500 603v27M1203.500 423v28M1292.500 423v28M1203.500 651v28M1292.500 651v28M706 444.500H885M826 638.500H945" />
    </g>
    <g stroke={CU} strokeWidth="15" strokeLinecap="round" strokeLinejoin="round">
      <path d="M522.300 930V1014l-4.300 4.500H385.500L354.500 987.500V202.500H709L732.700 178.700 753.500 199.500V480" />
      <path d="M520 328.500H637L666.300 358V477l5.200 5.300H740" />
      <path d="M520 445H561L637.500 521.500H884L1136 268.700H1362.500V844.300H936.500V584.500L961 560.500H1134.500L1186.500 613.500V662L1248 723" />
      <path d="M516 560.500H750M516.500 690V780M1248.500 510V600" />
      <path d="M760 599.500H843.500L960.500 482.500H1118.500L1236 365M1010 521.500H1134.500L1159.500 496.600H1248" />
    </g>
    <Net x={530.5} y={202.5} t="GND" w={21} />
    <Net x={579.5} y={328.5} t="GND" w={21} />
    <Net x={665} y={418} t="GND" w={21} r={-90} />
    <Net x={752} y={341} t="GND" w={21} r={-90} />
    <Net x={353} y={595.5} t="GND" w={21} r={-90} />
    <Net x={449.5} y={1018.5} t="GND" w={21} />
    <Net x={521} y={962} t="GND" w={21} r={-90} />
    <Net x={712} y={482.5} t="GND" w={21} />
    <Net x={636.5} y={560.5} t="Net-(U1-Q)" w={67} />
    <Net x={1248} y={268.7} t="Net-(U1-THR)" w={80} />
    <Net x={1148.5} y={844.5} t="Net-(U1-THR)" w={80} />
    <Net x={1008.5} y={395.5} t="Net-(U1-THR)" w={80} r={-45} />
    <Net x={935} y={715.5} t="Net-(U1-THR)" w={79} r={-90} />
    <Net x={1361} y={557} t="Net-(U1-THR)" w={79} r={-90} />
    <Net x={901.5} y={541} t="+9V" w={20} r={-45} />
    <Net x={1170.5} y={429.5} t="+9V" w={20} r={-45} />
    <Net x={1067} y={482.5} t="+9V" w={21} />
    <Net x={797.5} y={599.5} t="+9V" w={21} />

    <BigPad x={472} y={286} w={87} h={70} n="2" ny={302.5} net="GND" ty={340} big />
    <BigPad x={472} y={410} w={87} h={71} n="1" ny={427.5} net="Net-(U1-THR)" ty={456.5} />
    <BigPad x={474} y={521} w={84} h={72} n="1" ny={538.5} net="Net-(U1-Q)" ty={569.5} />
    <BigPad x={474} y={641} w={84} h={72} n="2" ny={658.5} net="Net-(D1-A)" ty={689.5} />
    <BigPad x={480} y={755} w={84} h={69} n="2" ny={771.5} net="Net-(D1-A)" ty={802} />
    <BigPad x={480} y={878} w={84} h={69} n="1" ny={895} net="GND" ty={930.5} big />
    <BigPad x={1206} y={341} w={84} h={72} n="1" ny={358.5} net="+9V" ty={396} big />
    <BigPad x={1206} y={461} w={84} h={72} n="2" ny={478.5} net="Net-(U1-DIS)" ty={508} />
    <BigPad x={1206} y={569} w={84} h={72} n="1" ny={587} net="Net-(U1-DIS)" ty={616} />
    <BigPad x={1206} y={689} w={84} h={72} n="2" ny={707} net="Net-(U1-THR)" ty={736} />
    {[["1", "GND"], ["2", "Net-(U1-THR)"], ["3", "Net-(U1-Q)"], ["4", "+9V"]].map(([n, t], i) => <ChipPad key={n} x={709} y={470 + i * 39} n={n} net={t} />)}
    {[["8", "+9V"], ["7", "Net-(U1-DIS)"], ["6", "Net-(U1-THR)"], ["5", "x"]].map(([n, t], i) => <ChipPad key={n} x={973} y={470 + i * 39} n={n} net={t} />)}
    <g stroke={CY} strokeWidth="1">
      {[[515.5, 383.5], [515.5, 616.5], [521.5, 850.5], [884.5, 541.5], [1247.5, 437.5], [1247.5, 664.5]].map(([x, y]) => <path key={`${x}${y}`} d={`M${x - 5.500} ${y}h11M${x} ${y - 5.500}v11`} />)}
    </g>
    <path d="M1471 479.500h80M1511.500 439v80" stroke="#8d8d8a" />
  </svg>
);

/* ---------- data ---------- */
const topTools = "save|setup|page print plot|undo redo|find|refresh zin zout zfit zobj zsel|ccw cw fv fh group ungroup lock unlock|fpedit lib|update drc";
const leftTools = "grid* polar inch mil mm* cursor|angle|rats* curved|hilite netcol|zone* zoneo|fpo viao trko|layers* tools";
const rightTools = "select* rat|fp track^ tune^ via zoneadd rule|line arc rect circle poly image text tbox dim^ del|origin^ ruler";

const ToolSet = ({ spec, Sep }: { spec: string; Sep: any }) => (
  <>
    {spec.split("|").map((grp, i) => (
      <React.Fragment key={i}>
        {i > 0 && <Sep />}
        {grp.split(" ").map((k) => {
          const id = k.replace(/[*^]/, "");
          return <Tool key={id} $on={k.endsWith("*")}>{I[id]}{k.endsWith("^") && <Corner />}</Tool>;
        })}
      </React.Fragment>
    ))}
  </>
);

const menus: [string, number][] = [["File", 48], ["Edit", 52], ["View", 59], ["Place", 62], ["Route", 69], ["Inspect", 79], ["Tools", 62], ["Preferences", 112], ["Help", 60]];
const layers: [string, string][] = [
  ["F.Cu", "#c83434"], ["B.Cu", "#4d7fc4"], ["F.Adhesive", "#840084"], ["B.Adhesive", "#000084"],
  ["F.Paste", "#b4a09a"], ["B.Paste", "#00c2c2"], ["F.Silkscreen", "#f2eda1"], ["B.Silkscreen", "#e8b2a7"],
  ["F.Mask", "#d864ff"], ["B.Mask", "#02ffee"], ["User.Drawings", "#c2c2c2"], ["User.Comments", "#5994dc"],
  ["User.Eco1", "#b4dbd2"], ["User.Eco2", "#d8c852"], ["Edge.Cuts", "#d0d2cd"], ["Margin", "#ff26e2"],
  ["F.Courtyard", "#ff26e2"], ["B.Courtyard", "#26e9ff"], ["F.Fab", "#afafaf"],
];
const filters = ["All items", "Locked items", "Footprints", "Text", "Tracks", "Vias", "Pads", "Graphics", "Zones", "Rule Areas", "Dimensions", "Other items"];
const info: [string, string, number][] = [["Pads", "18", 85], ["Vias", "0", 79], ["Track Segments", "46", 172], ["Nets", "7", 83], ["Unrouted", "0", 120]];
const status: [string, number][] = [["", 297], ["Z 16.74", 117], ["X 152.0000  Y 57.7000", 251], ["dx 152.0000  dy 57.7000  dist 162.5832", 397], ["grid X 0.1000  Y 0.1000", 288], ["mm", 92], ["", 254], ["", 224]];

/* ---------- taskbar drawings ---------- */
const StartLogo = () => (
  <svg width="36" height="36" viewBox="0 0 36 36">
    <defs><linearGradient id="st" x1="0" y1="0" x2="1" y2="1"><stop offset="0" stopColor="#8be3ff" /><stop offset="1" stopColor="#1499f5" /></linearGradient></defs>
    <path d="M2 1h15v16H1V2zM19 1h15l1 1v15H19zM1 19h16v16H2l-1-1zM19 19h16v15l-1 1H19z" fill="url(#st)" />
  </svg>
);
const DeskArt = () => (
  <svg width="80" height="38" viewBox="0 0 80 38">
    <path d="M12 24h58l9 11H0z" fill="#d9a777" /><path d="M0 35h79v2.500H0z" fill="#8d5a34" />
    <circle cx="17" cy="9.500" r="8" fill="#a9a5cf" /><circle cx="17" cy="9.500" r="5.800" fill="#f4f4fb" /><path d="M17 5v5h4" stroke="#333" fill="none" strokeWidth="1.300" />
    <path d="M30 2h28v22H30z" fill="#6d87b8" /><path d="M32 4h24v18H32z" fill="#6fc5f5" /><path d="M36 6h13v14H36z" fill="#bfe6fb" /><path d="M38 9h9M38 12h9M38 15h6" stroke="#3c86c6" strokeWidth="1.200" />
    <path d="M29 25h30l4 6H26z" fill="#a9a5cf" /><path d="M31 26.500h26l1 2H30z" fill="#6f6aa0" />
    <path d="M66 17l-3-9M69 17V6M72 17l3-10" stroke="#3da35a" strokeWidth="2" /><path d="M69 17V8" stroke="#f0a030" strokeWidth="2" />
    <path d="M62 16h13l-2 12h-9z" fill="#e2413c" />
  </svg>
);
const TaskView = () => (
  <svg width="36" height="36" viewBox="0 0 36 36"><defs><linearGradient id="tv" x2="0" y2="1"><stop stopColor="#fff" /><stop offset="1" stopColor="#dcdcdc" /></linearGradient></defs><rect x="9" y="2" width="27" height="24" rx="2" fill="url(#tv)" /><rect x="0" y="11" width="27" height="24" rx="2" fill="#6b6b6b" opacity=".85" /><path d="M9 11h18v15H9z" fill="#b9b9b9" /></svg>
);
const Folder = () => (
  <svg width="36" height="36" viewBox="0 0 36 36"><path d="M0 3q0-2 2-2h9l4 4h18q3 0 3 2v27H0z" fill="#e0a00c" /><path d="M0 9h13l3-3h18q2 0 2 2v24q0 2-2 2H2q-2 0-2-2z" fill="#ffcf48" /><path d="M5 34v-7q0-4 4-4h17q4 0 4 4v7z" fill="#1479d0" /><path d="M11 29h13" stroke="#0a4f9c" strokeWidth="2.500" /></svg>
);
const Edge = () => (
  <svg width="38" height="38" viewBox="0 0 38 38">
    <defs><linearGradient id="e1" x1="0" y1="0" x2="1" y2=".6"><stop stopColor="#1b9de2" /><stop offset=".5" stopColor="#2fc3cf" /><stop offset="1" stopColor="#6fdc4c" /></linearGradient></defs>
    <circle cx="19" cy="19" r="18" fill="#1268bd" />
    <path d="M1 18C2 6 11 1 19 1c11 0 18 8 18 16 0 6-5 9-9 9-4 0-6-2-5-4 3-6-2-11-8-11C8 11 2 14 1 18z" fill="url(#e1)" />
    <path d="M20 26c3 5 10 6 15 2-1 2-2 3-4 5-8-1-13-3-11-7z" fill="#202020" />
    <circle cx="10" cy="28" r="9" fill="#050505" /><path d="M6.500 24l1.500 7 2-5 2 5 1.500-7" stroke="#fff" strokeWidth="1.600" fill="none" />
  </svg>
);
const Mail = () => (
  <svg width="38" height="36" viewBox="0 0 38 36"><path d="M0 13L17 1h4l17 12v20q0 2-2 2H2q-2 0-2-2z" fill="#0b63b8" /><path d="M4 11h30L19 24z" fill="#f3f7fa" /><path d="M0 13l19 12L2 35q-2 0-2-2z" fill="#1b87d8" /><path d="M38 13L4 35h32q2 0 2-2z" fill="#37bdf0" /><path d="M2 35l17-11 17 11z" fill="#1f9fe6" /></svg>
);
const Insta = () => (
  <svg width="36" height="36" viewBox="0 0 36 36"><defs><linearGradient id="ig" x1="0" y1="1" x2=".8" y2="0"><stop stopColor="#fdc34a" /><stop offset=".35" stopColor="#f4613a" /><stop offset=".6" stopColor="#e1306c" /><stop offset="1" stopColor="#8a3ac8" /></linearGradient></defs><rect width="36" height="36" rx="8" fill="url(#ig)" /><g fill="none" stroke="#fff" strokeWidth="3"><rect x="6" y="6" width="24" height="24" rx="7" /><circle cx="18" cy="18" r="5.800" /></g><circle cx="25" cy="11" r="1.800" fill="#fff" /></svg>
);
const Gear = () => (
  <svg width="38" height="38" viewBox="0 0 38 38"><g stroke="#7d848c" strokeWidth="8">{[0, 60, 120].map((a) => <path key={a} d="M19 2v34" transform={`rotate(${a} 19 19)`} />)}</g><circle cx="19" cy="19" r="14" fill="#8d949c" /><circle cx="19" cy="19" r="9.500" fill="#c9d3dc" /><circle cx="19" cy="19" r="7" fill="#0f5fb5" /></svg>
);
const Whats = () => (
  <svg width="38" height="38" viewBox="0 0 38 38"><path d="M1 37l2.600-9.600A18 18 0 1110.500 34.500z" fill="#fff" /><path d="M4.500 33.500l1.700-6.500A15 15 0 1112 31.800z" fill="#35c04c" /><path d="M12 11c2-2 3-1 4 2 .5 1-1.500 2.500-1 3.500 1.500 3 3.500 4.500 6 5.500 1 .3 2-2.500 3-2 4 1.700 4 2 3 4-2 3.500-6 3-10 .5-5-3-9-9-5-13.500z" fill="#fff" /></svg>
);

export default function App() {
  return (
    <Win>
      <Global />
      <TitleBar>
        {I.app}
        <TitleText>criss powers task — PCB Editor</TitleText>
        <WinButtons>
          <WinButton><svg width="16" height="2"><path d="M0 1h16" stroke="#000" strokeWidth="1.300" /></svg></WinButton>
          <WinButton><svg width="16" height="16" viewBox="0 0 16 16" fill="none" stroke="#000" strokeWidth="1.400"><rect x="1" y="4" width="11" height="11" rx="2" /><path d="M4 1h7.500a3.500 3.500 0 013.500 3.500V12" /></svg></WinButton>
          <WinButton><svg width="16" height="16"><path d="M.5.5l15 15M15.500.5l-15 15" stroke="#000" strokeWidth="1.400" /></svg></WinButton>
        </WinButtons>
      </TitleBar>
      <MenuBar>{menus.map(([m, w]) => <MenuItem key={m} $w={w}>{m}</MenuItem>)}</MenuBar>
      <ToolRow $h={48} $pl={4}>
        <ToolSet spec={topTools} Sep={VSep} />
        <VSep $m="0 7px 0 5px" />
        <Combo $w={181} $h={31} $dark><LayerName><TinySwatch />B.Cu (PgDn)</LayerName><Chevron /></Combo>
        <Tool>{I.pair}</Tool><VSep $m="0 4px 0 5px" /><Tool>{I.sch}</Tool><VSep $m="0 3px 0 4px" /><Tool>{I.term}</Tool>
      </ToolRow>
      <ToolRow $h={44} $pl={8}>
        <Combo $w={230}>Track: use netclass width<Chevron /></Combo>
        <Tool $on>{I.autow}</Tool>
        <VSep $m="0 6px 0 5px" />
        <Combo $w={220}>Via: use netclass sizes<Chevron /></Combo>
        <VSep $m="0 6px 0 5px" />
        <Combo $w={297} $ls={0.08}>Grid: 0.1000 mm (0.0039 in)<Chevron /></Combo>
        <VSep $m="0 6px 0 5px" />
        <Combo $w={144} $ls={0}>Zoom 20.00<Chevron /></Combo>
      </ToolRow>
      <Body>
        <SideBar $w={45}><ToolSet spec={leftTools} Sep={HSep} /></SideBar>
        <CanvasBox><Pcb /></CanvasBox>
        <SideBar $w={46}><ToolSet spec={rightTools} Sep={HSep} /></SideBar>
        <Splitter />
        <Panel>
          <PanelHead>Appearance</PanelHead>
          <TabRow>
            <Tab $w={75} $active>Layers</Tab>
            <Tab $w={47}>Objects</Tab>
            <TabArrow><svg width="6" height="10"><path d="M6 0L1 5l5 5z" fill="#000" /></svg></TabArrow>
            <TabArrow><svg width="6" height="10"><path d="M0 0l5 5-5 5z" fill="#000" /></svg></TabArrow>
          </TabRow>
          <Notebook>
            <ListArea>
              <LayerList>
                {layers.map(([n, c]) => (
                  <LayerRow key={n} $sel={n === "B.Cu"}>
                    <RowMark $sel={n === "B.Cu"} /><Swatch $c={c} /><Eye /><LayerText>{n}</LayerText>
                  </LayerRow>
                ))}
              </LayerList>
              <ScrollCol><Thumb /></ScrollCol>
            </ListArea>
            <LayerOptions><svg width="6" height="12"><path d="M0 0l6 6-6 6z" fill="#000" /></svg>Layer Display Options</LayerOptions>
          </Notebook>
          <Presets>
            <PresetLabel>Presets (Ctrl+Tab):</PresetLabel>
            <PresetCombo $w={166}>All Layers<Chevron /></PresetCombo>
            <PresetLabel>Viewports (Shift+Tab):</PresetLabel>
            <PresetCombo $w={166}>---<Chevron /></PresetCombo>
          </Presets>
          <Gap />
          <PanelHead>Selection Filter</PanelHead>
          <Filters>
            {filters.map((f, i) => (
              <Check key={f}>
                <Box $off={i === 1}>{i !== 1 && <svg width="12" height="9" fill="none" stroke="#fff" strokeWidth="1.200"><path d="M1 4.500L4.500 8 11 1" /></svg>}</Box>
                {f}
              </Check>
            ))}
          </Filters>
        </Panel>
      </Body>
      <InfoBar>{info.map(([a, b, w]) => <Info key={a} $w={w}>{a}<br />{b}</Info>)}</InfoBar>
      <StatusBar>{status.map(([t, w], i) => <Status key={i} $w={w}>{t}</Status>)}</StatusBar>
      <TaskBar>
        <StartBox><StartLogo /></StartBox>
        <Search>
          <svg width="24" height="24" viewBox="0 0 24 24" fill="none" stroke="#e0e0e0" strokeWidth="2"><circle cx="11" cy="10" r="8.500" /><path d="M16.500 16.500l6 6" /></svg>
          <SearchText>Search</SearchText>
          <DeskArt />
        </Search>
        <Apps>
          <TaskApp><TaskView /></TaskApp>
          <TaskApp><Folder /></TaskApp>
          <TaskApp><Edge /><Run /></TaskApp>
          <TaskApp><Mail /><Badge>2</Badge></TaskApp>
          <TaskApp><HpText><small>my</small>hp</HpText></TaskApp>
          <TaskApp><Insta /></TaskApp>
          <TaskApp><Gear /><Run /></TaskApp>
          <TaskApp><Whats /><Badge>3</Badge><Run /></TaskApp>
          <TaskApp $active><KiText>Ki</KiText><Run $on /></TaskApp>
        </Apps>
        <Tray>
          <svg width="18" height="10" fill="none" stroke="#fff" strokeWidth="1.800"><path d="M1 9l8-8 8 8" /></svg>
          <Lang>ENG<br />IN</Lang>
          <svg width="100" height="28" viewBox="0 0 100 28" fill="none" stroke="#fff" strokeWidth="1.700">
            <path d="M14 3H4Q1 3 1 6v11q0 3 3 3h14M7 20v4M14 20v4M4 25.500h13M17 3h6v7h-6zM20 10v16" />
            <path d="M37 11h4l6-5v17l-6-5h-4zM50 10q3 4 0 9M53 7.500q5 6.500 0 13" /><path d="M56.500 5q7 9 0 18" stroke="#777" />
            <rect x="74" y="7" width="18" height="15" rx="3" /><path d="M77 10h7v9h-7z" fill="#fff" /><path d="M94.500 11.500v6" strokeWidth="3" />
          </svg>
          <Clock>12:38<br />20-04-2023</Clock>
        </Tray>
      </TaskBar>
    </Win>
  );
}
